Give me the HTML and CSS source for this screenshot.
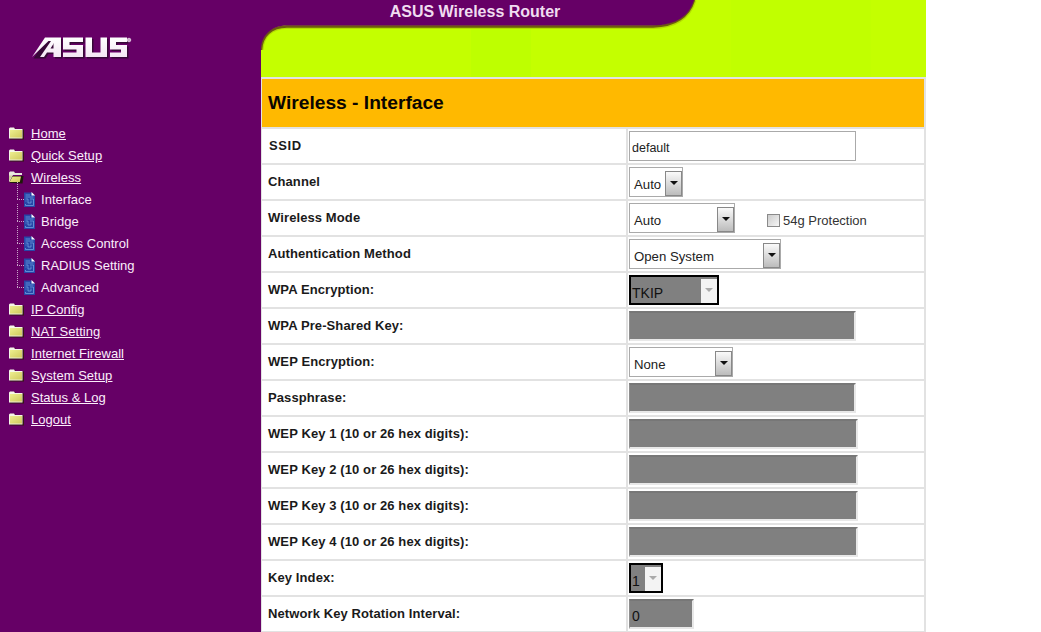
FILE: index.html
```html
<!DOCTYPE html>
<html lang="en">
<head>
<meta charset="utf-8">
<title>ASUS Wireless Router</title>
<link rel="stylesheet" href="styles.css">
</head>
<body>
<svg class="defs" width="0" height="0" aria-hidden="true">
  <defs>
    <linearGradient id="folderFill" x1="0" y1="0" x2="1" y2="1"><stop offset="0" stop-color="#eeee90"/><stop offset="1" stop-color="#cfc95c"/></linearGradient>
    <linearGradient id="logoFill" x1="0" y1="0" x2="0" y2="1"><stop offset="0" stop-color="#ffffff"/><stop offset="1" stop-color="#f4e6f4"/></linearGradient>
    <symbol id="folder" viewBox="0 0 15 13">
      <path d="M1 12.5V2.2L2 1h4l1 1.5h8v10z" fill="#2e1a08" opacity=".85"/>
      <path d="M0 11.5V1.600L1 .5h4l1 1.500h7.500v9.500z" fill="#f6f6e8"/>
      <rect x="1" y="3" width="12" height="7.600" fill="url(#folderFill)"/>
    </symbol>
    <symbol id="folderOpen" viewBox="0 0 15 13">
      <path d="M0 11.500V1.600L1 .5h4l1 1.500h7v2H4z" fill="#e8e8e0"/>
      <path d="M.5 11.800 3.500 5h11l-1 7.500z" fill="#1e1a08"/>
      <path d="M.5 11 3.500 5.500h8.500L10.800 11z" fill="url(#folderFill)"/>
      <path d="M0 4.500h3.500L0 10z" fill="#cfcfa0"/>
    </symbol>
    <symbol id="doc" viewBox="0 0 11 15">
      <path d="M0 .5h7.500l3.500 3V15H0z" fill="#2747a8"/>
      <path d="M7.500 0 11 3.500H7.500z" fill="#fff"/>
      <path d="M1.500 3h4.500M1.500 5h8M1.500 7h2.500v4h3V8.500M6 7h3.500v6.500h-8v-1.500M1.500 9h1" fill="none" stroke="#6f9fe0" stroke-width=".8"/>
    </symbol>
  </defs>
</svg>

<div class="page">
  <aside class="sidebar">
    <svg class="logo" viewBox="0 0 100 23" width="100" height="23" role="img" aria-label="ASUS">
      <g fill="#2c0b2c" transform="translate(1.500 1.500)" opacity=".8">
        <path d="M0 20 13 .5H29V20H21.500V15.500H15L12 20z"/><path d="M31 .5h20v4.500H37.500v3H51V20H31v-4.500h13.500v-3H31zM53.500 .5h6.500v15h8.500V.5h6.500V20H53.500zM78 .5h17v4.500H84v3h11V20H78v-4.500h11v-3H78z"/>
      </g>
      <g fill="url(#logoFill)">
        <path fill-rule="evenodd" d="M0 20 13 .5H29V20H21.500V15.500H15L12 20H8L19 4H16.500zM18.500 11.500h3V6H22z"/>
        <path d="M31 .5h20v4.500H37.500v3H51V20H31v-4.500h13.500v-3H31zM53.500 .5h6.500v15h8.500V.5h6.500V20H53.500zM78 .5h17v4.500H84v3h11V20H78v-4.500h11v-3H78z"/>
      </g>
      <circle cx="97" cy="3" r="1.800" fill="#cdb0cd" stroke="#f4e6f4" stroke-width=".7"/>
    </svg>
    <nav class="tree">
      <a class="item" href="#"><svg class="folder"><use href="#folder"/></svg><span>Home</span></a>
      <a class="item" href="#"><svg class="folder"><use href="#folder"/></svg><span>Quick Setup</span></a>
      <a class="item" href="#"><svg class="folder"><use href="#folderOpen"/></svg><span>Wireless</span></a>
      <div class="sub">
        <a class="leaf" href="#"><svg class="doc"><use href="#doc"/></svg><span>Interface</span></a>
        <a class="leaf" href="#"><svg class="doc"><use href="#doc"/></svg><span>Bridge</span></a>
        <a class="leaf" href="#"><svg class="doc"><use href="#doc"/></svg><span>Access Control</span></a>
        <a class="leaf" href="#"><svg class="doc"><use href="#doc"/></svg><span>RADIUS Setting</span></a>
        <a class="leaf" href="#"><svg class="doc"><use href="#doc"/></svg><span>Advanced</span></a>
      </div>
      <a class="item" href="#"><svg class="folder"><use href="#folder"/></svg><span>IP Config</span></a>
      <a class="item" href="#"><svg class="folder"><use href="#folder"/></svg><span>NAT Setting</span></a>
      <a class="item" href="#"><svg class="folder"><use href="#folder"/></svg><span>Internet Firewall</span></a>
      <a class="item" href="#"><svg class="folder"><use href="#folder"/></svg><span>System Setup</span></a>
      <a class="item" href="#"><svg class="folder"><use href="#folder"/></svg><span>Status &amp; Log</span></a>
      <a class="item" href="#"><svg class="folder"><use href="#folder"/></svg><span>Logout</span></a>
    </nav>
  </aside>

  <main class="main">
    <header class="banner">
      <svg class="banner-art" viewBox="0 0 665 77" width="665" height="77" aria-hidden="true">
        <rect width="665" height="77" fill="#c4ff00"/>
        <rect x="210" y="28" width="60" height="49" fill="#bcff00" opacity=".7"/>
        <rect x="470" y="0" width="140" height="77" fill="#c0ff00" opacity=".7"/>
        <path d="M433 0C428 16 416 26 392 26.500H26C10 26.500 .5 36 0 50" fill="none" stroke="#b4dc00" stroke-width="5"/>
        <path d="M433 0C428 16 416 26 392 26.500H26C10 26.500 .5 36 0 50" fill="none" stroke="#6d5a10" stroke-width="2.500"/>
        <path d="M0 0H433C428 16 416 25 392 25.500H26C10 25.500 0 36 0 50Z" fill="#660066"/>
      </svg>
      <div class="banner-title">ASUS Wireless Router</div>
    </header>

    <section class="panel">
      <h1 class="title">Wireless - Interface</h1>
      <div class="row ssid"><label class="name">SSID</label><div class="val"><input class="text w-l" value="default"></div></div>
      <div class="row"><label class="name">Channel</label><div class="val"><div class="sel w-54"><span>Auto</span><i class="btn"></i></div></div></div>
      <div class="row"><label class="name">Wireless Mode</label><div class="val"><div class="sel w-106"><span>Auto</span><i class="btn"></i></div><label class="check"><input type="checkbox"><span>54g Protection</span></label></div></div>
      <div class="row"><label class="name">Authentication Method</label><div class="val"><div class="sel w-152"><span>Open System</span><i class="btn"></i></div></div></div>
      <div class="row"><label class="name">WPA Encryption:</label><div class="val"><div class="sel off w-90"><span>TKIP</span><i class="btn"></i></div></div></div>
      <div class="row"><label class="name">WPA Pre-Shared Key:</label><div class="val"><input class="text dis w-l" disabled></div></div>
      <div class="row"><label class="name">WEP Encryption:</label><div class="val"><div class="sel w-104"><span>None</span><i class="btn"></i></div></div></div>
      <div class="row"><label class="name">Passphrase:</label><div class="val"><input class="text dis w-l" disabled></div></div>
      <div class="row"><label class="name">WEP Key 1 (10 or 26 hex digits):</label><div class="val"><input class="text dis w-xl" disabled></div></div>
      <div class="row"><label class="name">WEP Key 2 (10 or 26 hex digits):</label><div class="val"><input class="text dis w-xl" disabled></div></div>
      <div class="row"><label class="name">WEP Key 3 (10 or 26 hex digits):</label><div class="val"><input class="text dis w-xl" disabled></div></div>
      <div class="row"><label class="name">WEP Key 4 (10 or 26 hex digits):</label><div class="val"><input class="text dis w-xl" disabled></div></div>
      <div class="row"><label class="name">Key Index:</label><div class="val"><div class="sel off w-34"><span>1</span><i class="btn"></i></div></div></div>
      <div class="row"><label class="name">Network Key Rotation Interval:</label><div class="val"><input class="text dis w-s num" value="0" disabled></div></div>
    </section>
  </main>
</div>
</body>
</html>
```
FILE: styles.css
```css
* { box-sizing: border-box; }
html, body { margin: 0; height: 100%; overflow: hidden; background: #fff; }
body { font-family: "Liberation Sans", Arial, sans-serif; color: #111; }
.defs { position: absolute; }

.page { display: flex; width: 926px; height: 632px; }

.sidebar { width: 261px; flex: none; background: #660066; padding: 37px 0 0 32px; }
.logo { display: block; }
.tree { margin: 62px 0 0 -32px; display: flex; flex-direction: column; position: relative; }
.item, .leaf { display: flex; align-items: center; height: 22px; color: #fbeefb; font-size: 13px; letter-spacing: .03px; }
.item { padding-left: 9px; }
.item span { margin-left: 7px; text-decoration: underline; }
.folder { width: 15px; height: 13px; flex: none; }
.leaf { padding-left: 24px; text-decoration: none; position: relative; }
.leaf span { margin-left: 6px; }
.doc { width: 11px; height: 15px; flex: none; }
.sub { display: flex; flex-direction: column; }
.leaf::before { content: ""; position: absolute; left: 17px; top: 11px; width: 7px; border-top: 1px dotted #c9a6c9; }
.leaf::after { content: ""; position: absolute; left: 17px; top: -6px; height: 17px; border-left: 1px dotted #c9a6c9; }

.main { width: 665px; flex: none; }
.banner { height: 77px; position: relative; }
.banner-art { display: block; }
.banner-title { position: absolute; left: 128px; top: 3px; width: 172px; text-align: center; font-size: 16px; font-weight: bold; color: #f0dcf0; white-space: nowrap; }

.panel { background: #fff; border: solid #e2e2e2; border-width: 2px 2px 0 1px; }
.title { margin: 0; height: 50px; background: #ffb900; border-bottom: 2px solid #e2e2e2; padding: 0 0 1px 6px; display: flex; align-items: center; font-size: 19.200px; line-height: 1; color: #0a0500; }

.row { display: flex; height: 36px; border-bottom: 2px solid #e2e2e2; }
.name { width: 366px; flex: none; display: flex; align-items: center; padding: 0 0 1px 6px; font-size: 13px; letter-spacing: .1px; font-weight: bold; color: #1a1a1a; border-right: 2px solid #e2e2e2; }
.ssid .name { padding-left: 7px; letter-spacing: .6px; }
.val { flex: 1; display: flex; align-items: flex-start; padding: 2px 0 0 1px; }

.text { display: block; height: 30px; border: 1px solid #aaa; background: #fff; padding: 3px 3px 0 2px; font: 12.500px "Liberation Sans", Arial, sans-serif; color: #222; }
.dis { background: #808080; border-style: solid; border-width: 2px 2px 2px 1px; border-color: #777 #e8e8e8 #e8e8e8 #8f8f8f; color: #111; }
.num { font-size: 14px; }
.w-l { width: 227px; }
.w-xl { width: 229px; }
.w-s { width: 65px; }

.sel { position: relative; height: 30px; border: 1px solid #aaa; background: #fff; padding: 9px 0 0 4px; font-size: 13.200px; line-height: 16px; color: #222; }
.btn { position: absolute; right: 0; bottom: 0; width: 17px; height: 25px; background: linear-gradient(#fafafa, #bcbcbc); border: 1px solid #888; }
.btn::after { content: ""; position: absolute; left: 4px; top: 9px; border: 4px solid transparent; border-top: 4px solid #111; border-bottom: 0; }
.w-54 { width: 54px; }
.w-106 { width: 106px; }
.w-152 { width: 152px; }
.w-104 { width: 104px; }
.w-90 { width: 90px; }
.w-34 { width: 34px; }
.off { background: #808080; border: 2px solid #000; color: #111; padding: 8px 0 0 1px; font-size: 14px; }
.off .btn { width: 16px; height: 24px; background: #f3f3f3; border: 0; }
.off .btn::after { border-top-color: #aaa; }

.check { display: flex; align-items: center; margin: 10px 0 0 32px; font-size: 13px; color: #333; }
.check input { appearance: none; width: 13px; height: 13px; margin: 0 3px 0 0; border: 1px solid #8a8a8a; background: linear-gradient(135deg, #ccc, #f6f6f6); }
```
